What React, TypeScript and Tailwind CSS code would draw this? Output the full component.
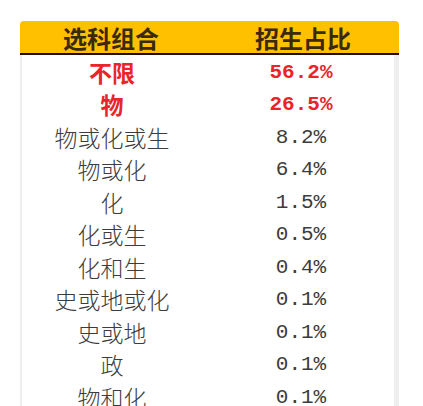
const rows = [
  { name: "不限", pct: "56.2%", hot: true },
  { name: "物", pct: "26.5%", hot: true },
  { name: "物或化或生", pct: "8.2%" },
  { name: "物或化", pct: "6.4%" },
  { name: "化", pct: "1.5%" },
  { name: "化或生", pct: "0.5%" },
  { name: "化和生", pct: "0.4%" },
  { name: "史或地或化", pct: "0.1%" },
  { name: "史或地", pct: "0.1%" },
  { name: "政", pct: "0.1%" },
  { name: "物和化", pct: "0.1%" },
];

const cjk = "font-['Noto_Sans_CJK_SC',sans-serif]";
const mono = "font-['Liberation_Mono','Noto_Sans_CJK_SC',monospace]";

export default function App() {
  return (
    <div className="w-[423px] h-[406px] overflow-hidden bg-white pt-[21px] pl-[20px]">
      <div className="w-[379px]">
        <div className="h-[34px] bg-[#ffc000] rounded-t-[4px] border-b-2 border-[#1a1208] grid grid-cols-[182px_1fr] items-center">
          <span className={`${cjk} text-center text-[24px] leading-none font-bold text-[#3a2a0a] pt-[1px]`}>选科组合</span>
          <span className={`${cjk} text-center text-[24px] leading-none font-bold text-[#3a2a0a] pl-[5px] pt-[1px]`}>招生占比</span>
        </div>
        <div className="border-l-2 border-r-[5px] border-[#eeeeee] pt-[1px]">
          {rows.map((r) => (
            <div key={r.name} className="h-[32.5px] grid grid-cols-[180px_1fr] items-center">
              <span
                className={`${cjk} text-center text-[23px] leading-none ${
                  r.hot ? "font-bold text-[#e8252b]" : "font-light text-[#3c3c3c]"
                }`}
              >
                {r.name}
              </span>
              <span
                className={`${mono} text-center text-[21px] leading-none pl-[6px] ${
                  r.hot ? "font-bold text-[#e8252b]" : "text-[#3c3c3c]"
                }`}
              >
                {r.pct}
              </span>
            </div>
          ))}
        </div>
      </div>
    </div>
  );
}
